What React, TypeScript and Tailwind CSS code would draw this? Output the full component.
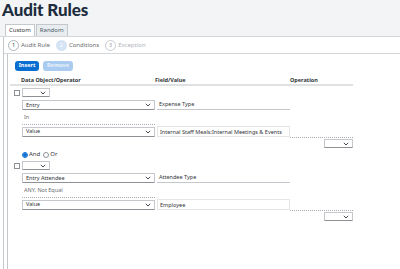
import React from 'react';

const Chevron = () => (
  <svg width="6" height="4" viewBox="0 0 6 4" className="shrink-0">
    <path d="M0.8 0.8 L3 3 L5.2 0.8" fill="none" stroke="#32363a" strokeWidth="0.9" />
  </svg>
);

const Select = ({ label, className }: { label?: string; className: string }) => (
  <div
    className={`flex items-center justify-between bg-white border border-[#c4c8cc] border-b-[#8d9196] rounded-[1px] pl-[3px] pr-[3px] text-[5.5px] text-[#32363a] ${className}`}
  >
    <span>{label}</span>
    <Chevron />
  </div>
);

type Condition = {
  object: string;
  field: string;
  operator: string;
  value: string;
};

const conditions: Condition[] = [
  { object: 'Entry', field: 'Expense Type', operator: 'In', value: 'Internal Staff Meals;Internal Meetings & Events' },
  { object: 'Entry Attendee', field: 'Attendee Type', operator: 'ANY, Not Equal', value: 'Employee' },
];

const ConditionBlock = ({ c }: { c: Condition }) => (
  <div className="flex flex-col">
    {/* checkbox + connector select */}
    <div className="flex items-center h-[9px] mt-[2px]">
      <div className="w-[6px] h-[6px] ml-[4px] border border-[#8d9196] bg-white" />
      <Select className="ml-[2px] w-[28px] h-[9px]" />
    </div>
    {/* object + field */}
    <div className="flex items-end h-[12px] mt-[1px] pl-[12px]">
      <Select label={c.object} className="w-[133px] h-[10px]" />
      <div className="ml-[2px] w-[133px] h-[11px] border-b border-[#c4c8cc] pl-[2px] text-[5.5px] leading-[10px] text-[#32363a]">
        {c.field}
      </div>
    </div>
    {/* operator */}
    <div className="pl-[12px] mt-[2px]">
      <div className="w-[133px] h-[13px] border-b border-dotted border-[#a9adb2] pl-[2px] text-[5.5px] leading-[11px] text-[#6a6d70]">
        {c.operator}
      </div>
    </div>
    {/* value */}
    <div className="flex items-center h-[11px] mt-[1px] pl-[12px]">
      <Select label="Value" className="w-[133px] h-[10px]" />
      <div className="ml-[2px] w-[133px] h-[11px] border border-[#e5e5e5] pl-[2px] text-[5.5px] leading-[10px] text-[#32363a]">
        {c.value}
      </div>
    </div>
    {/* operation */}
    <div className="pl-[280px]">
      <div className="w-[63px] border-t border-dotted border-[#a9adb2] flex justify-end pt-[1px]">
        <Select className="w-[29px] h-[9px]" />
      </div>
    </div>
  </div>
);

export default function App() {
  return (
    <div className="w-[400px] h-[269px] overflow-hidden bg-white font-['Noto_Sans',sans-serif] text-[#32363a]">
      {/* page header */}
      <div className="h-[37px] bg-[#f3f4f5] border-b border-[#d5d8db] flex flex-col">
        <h1 className="font-['Lato',sans-serif] font-black text-[17px] leading-[19px] pl-[2px] text-[#1d2d3e] tracking-[-0.1px]">
          Audit Rules
        </h1>
        <div className="flex items-end pl-[5px] mt-[5px]">
          <div className="h-[12px] px-[3px] bg-white border border-b-0 border-[#c4c8cc] text-[6px] leading-[11px] text-[#32363a]">
            Custom
          </div>
          <div className="h-[12px] px-[3px] ml-[1px] bg-[#e9ecef] border border-b-0 border-[#c4c8cc] text-[6px] leading-[11px] text-[#4a5a6a]">
            Random
          </div>
        </div>
      </div>

      {/* outer panel */}
      <div className="ml-[3px] h-[232px] border-l border-[#c4c8cc] flex flex-col">
        {/* steps */}
        <div className="h-[17px] flex items-center pl-[4px] text-[6px] border-b border-[#d5d8db]">
          <div className="w-[11px] h-[11px] rounded-full border border-[#b0b4b8] flex items-center justify-center text-[5.5px] text-[#32363a]">1</div>
          <span className="ml-[2px] text-[#6a6d70]">Audit Rule</span>
          <div className="ml-[6px] w-[11px] h-[11px] rounded-full bg-[#d5e4f4] flex items-center justify-center text-[5.5px] text-white">2</div>
          <span className="ml-[2px] text-[#6a6d70]">Conditions</span>
          <div className="ml-[6px] w-[11px] h-[11px] rounded-full border border-[#c8ccd0] flex items-center justify-center text-[5.5px] text-[#9a9ea2]">3</div>
          <span className="ml-[2px] text-[#b0b4b8]">Exception</span>
        </div>

        {/* inner box */}
        <div className="ml-[3px] flex-1 border-l border-[#c4c8cc] pl-[2px] pt-[7px]">
          <div className="flex gap-[4px] pl-[5px]">
            <button className="h-[10px] w-[24px] rounded-[3px] bg-[#0a6ed1] text-white text-[5.5px] font-bold leading-none">
              Insert
            </button>
            <button className="h-[10px] w-[30px] rounded-[3px] bg-[#a9cbef] text-[#e8f1fb] text-[5.5px] font-bold leading-none">
              Remove
            </button>
          </div>

          {/* table header */}
          <div className="flex items-end h-[15px] w-[343px] border-b-2 border-[#dfe1e3] text-[5.5px] font-bold text-[#32363a] leading-[8px]">
            <span className="pl-[11px] w-[145px]">Data Object/Operator</span>
            <span className="w-[135px]">Field/Value</span>
            <span>Operation</span>
          </div>

          <ConditionBlock c={conditions[0]} />

          {/* and / or */}
          <div className="flex items-center h-[9px] mt-[2px] pl-[12px] text-[6px]">
            <div className="w-[6px] h-[6px] rounded-full border border-[#0a6ed1] flex items-center justify-center">
              <div className="w-[4px] h-[4px] rounded-full bg-[#0a6ed1]" />
            </div>
            <span className="ml-[1px]">And</span>
            <div className="ml-[3px] w-[6px] h-[6px] rounded-full border border-[#8d9196]" />
            <span className="ml-[1px]">Or</span>
          </div>

          <ConditionBlock c={conditions[1]} />
        </div>
      </div>
    </div>
  );
}
